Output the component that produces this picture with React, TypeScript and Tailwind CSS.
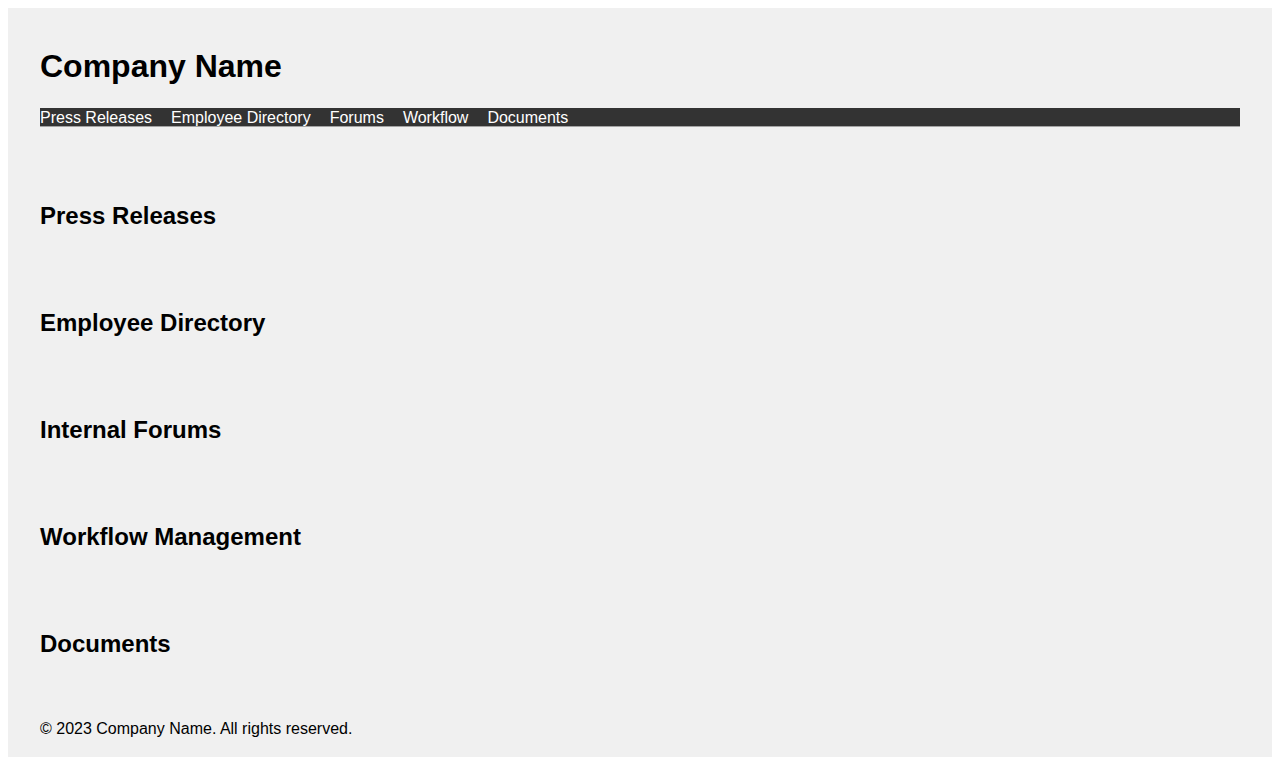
const navLinks = ["Press Releases", "Employee Directory", "Forums", "Workflow", "Documents"];

const sections = [
  "Press Releases",
  "Employee Directory",
  "Internal Forums",
  "Workflow Management",
  "Documents",
];

export default function App() {
  return (
    <div className="min-h-screen bg-white p-2 font-['Liberation_Sans',Arial,sans-serif] text-black">
      <div className="bg-[#f0f0f0] px-8">
        <header className="pt-[40px] pb-[35px]">
          <h1 className="text-[32px] leading-[37px] font-bold">Company Name</h1>
          <nav className="mt-[23px] flex h-[19px] gap-[19px] border-b border-[#a3a3a3] bg-[#333333] text-[16px] leading-[19px] text-white">
            {navLinks.map((link) => (
              <a key={link} href="#" className="block">
                {link}
              </a>
            ))}
          </nav>
        </header>

        {sections.map((title) => (
          <section key={title} className="py-[40px]">
            <h2 className="text-[24px] leading-[27px] font-bold">{title}</h2>
          </section>
        ))}

        <footer className="pt-[23px] pb-[19px] text-[16px] leading-[18px]">
          <p>© 2023 Company Name. All rights reserved.</p>
        </footer>
      </div>
    </div>
  );
}
